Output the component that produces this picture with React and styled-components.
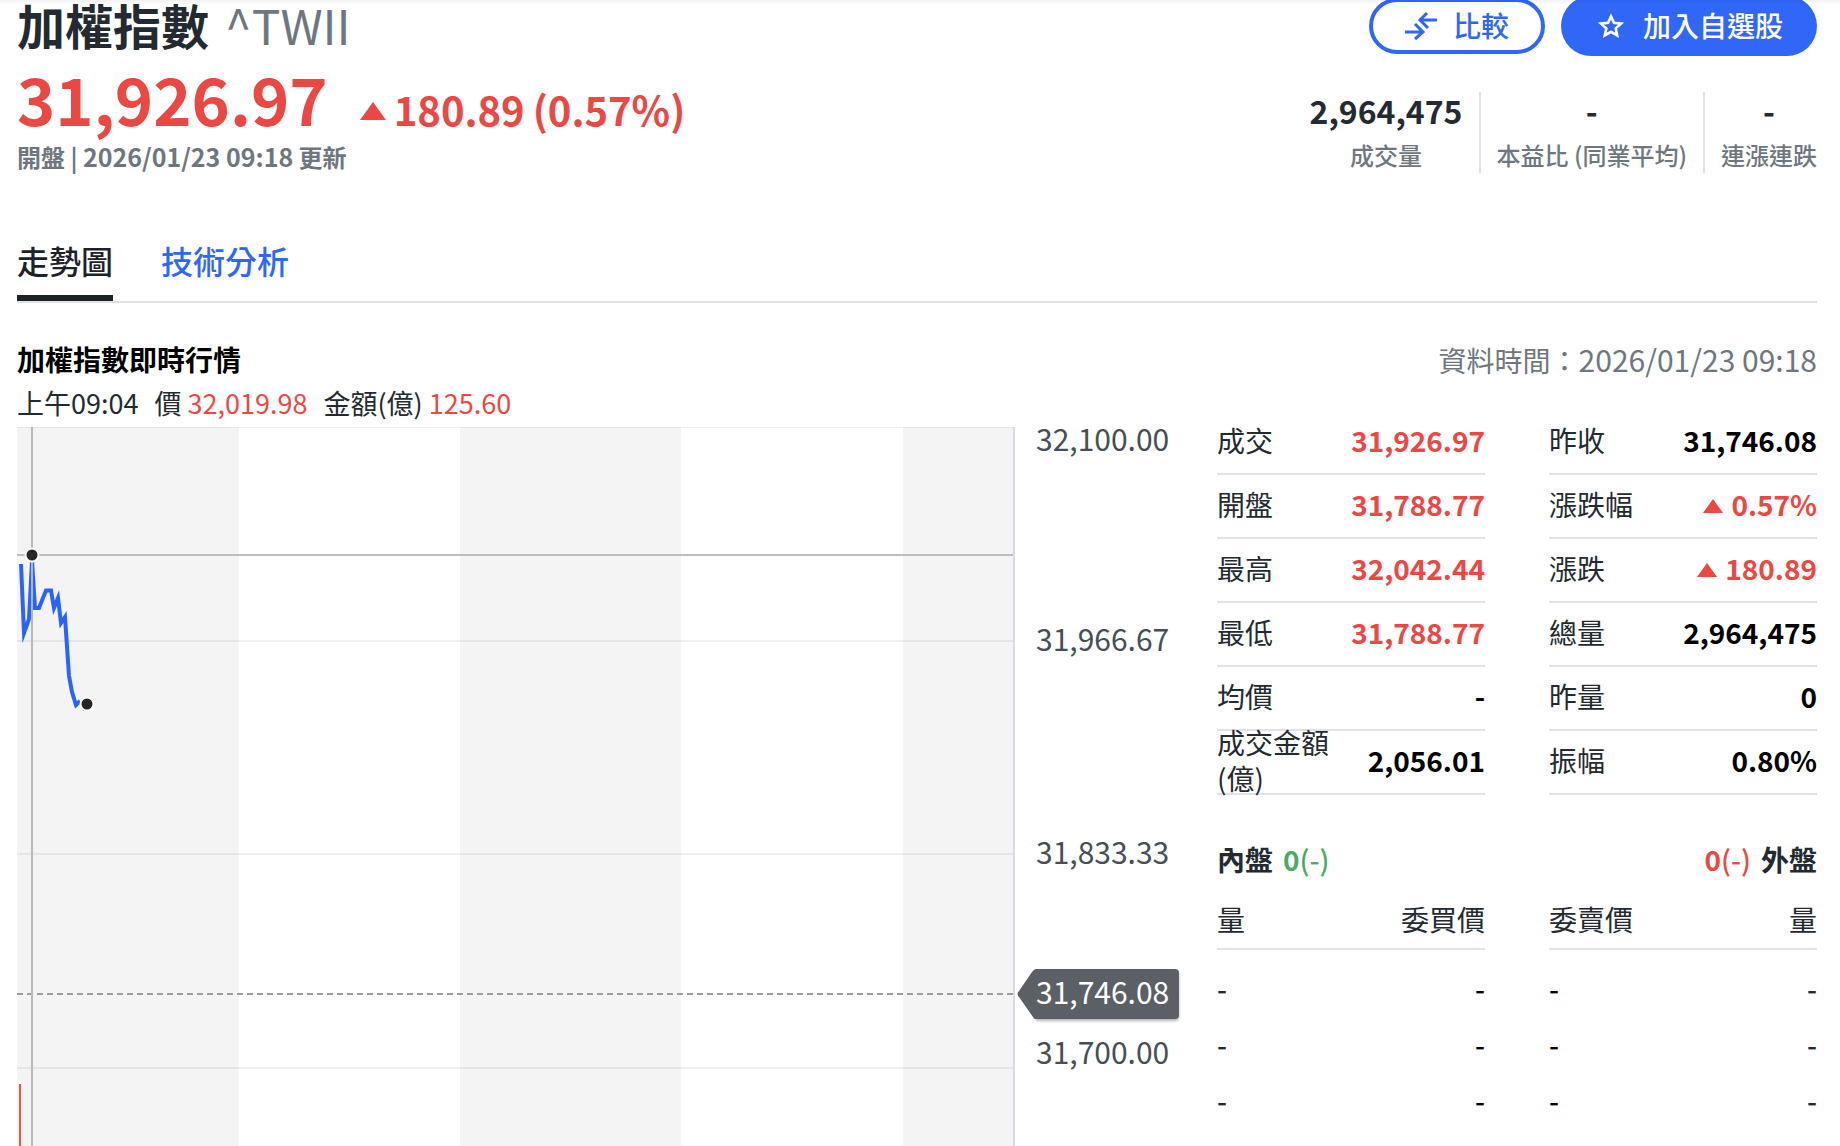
import React from 'react';
import styled, { createGlobalStyle } from 'styled-components';

const color = {
  ink: '#232a31',
  black: '#000000',
  muted: '#6e7780',
  axis: '#464e56',
  blue: '#3067f8',
  line: '#2962ff',
  up: '#eb4843',
  down: '#4daa66',
  border: '#e0e4e9',
  rule: '#e2e3e8',
  band: '#f4f4f4',
  tag: '#5b6067',
};

const GlobalStyle = createGlobalStyle`
  *, *::before, *::after { box-sizing: border-box; }
  html, body { margin: 0; background: #ffffff; }
  body {
    color: ${color.ink};
    font-family: "Noto Sans CJK TC", "Noto Sans", sans-serif;
    font-size: 28px;
    line-height: 36px;
  }
`;

const Page = styled.main`
  position: relative;
  height: 100vh;
  overflow: hidden;
  padding: 0 23px 0 17px;
`;

const TopShade = styled.div`
  position: absolute;
  inset: 0 0 auto 0;
  height: 5px;
  background: linear-gradient(rgba(0, 0, 0, 0.05), rgba(0, 0, 0, 0));
`;

const TitleBar = styled.header`
  display: flex;
  align-items: center;
  justify-content: space-between;
  height: 60px;
  margin-top: -4px;
`;

const TitleGroup = styled.div`
  display: flex;
  gap: 16px;
  align-items: baseline;
  padding-bottom: 4px;
  font-size: 48px;
  line-height: 56px;
`;

const Title = styled.h1`
  margin: 0;
  font-size: inherit;
  font-weight: 700;
`;

const Symbol = styled.span`
  color: ${color.muted};
`;

const Actions = styled.div`
  display: flex;
  align-items: center;
  gap: 16px;
`;

const PillButton = styled.button`
  display: flex;
  align-items: center;
  gap: 16px;
  height: ${(p) => (p.$primary ? 60 : 56)}px;
  padding: 0 ${(p) => (p.$primary ? 34 : 32)}px;
  border: ${(p) => (p.$primary ? '0' : `4px solid ${color.blue}`)};
  border-radius: 30px;
  background: ${(p) => (p.$primary ? color.blue : '#ffffff')};
  color: ${(p) => (p.$primary ? '#ffffff' : color.blue)};
  font: inherit;
  font-weight: 500;
  cursor: pointer;
`;

const ButtonLabel = styled.span`
  padding-bottom: 2px;
`;

const Summary = styled.section`
  display: flex;
  align-items: flex-end;
  justify-content: space-between;
`;

const PriceLine = styled.div`
  display: flex;
  align-items: baseline;
  gap: 8px;
  color: ${color.up};
  font-size: 40px;
  font-weight: 700;
  line-height: 40px;
`;

const LastPrice = styled.span`
  margin-right: 24px;
  font-size: 65px;
  line-height: 84px;
`;

const UpdateTime = styled.div`
  color: ${color.muted};
  font-size: 24px;
  font-weight: 700;
  line-height: 33px;
`;

const UpdateStamp = styled.time`
  font-size: 25px;
`;

const Stats = styled.dl`
  display: flex;
  margin: 0;
`;

const Stat = styled.div`
  display: flex;
  flex-direction: column-reverse;
  gap: 9px;
  padding: 0 16px;
  border-right: 2px solid ${color.border};
  text-align: center;

  &:last-child {
    padding-right: 0;
    border-right: 0;
  }
`;

const StatLabel = styled.dt`
  color: ${color.muted};
  font-size: 24px;
  font-weight: 500;
`;

const StatValue = styled.dd`
  margin: 0;
  font-size: 32px;
  font-weight: 700;
`;

const Tabs = styled.nav`
  display: flex;
  gap: 48px;
  margin-top: 56px;
  border-bottom: 2px solid ${color.border};
`;

const Tab = styled.a`
  height: 72px;
  border-bottom: 6px solid ${(p) => (p.$active ? '#1d2228' : 'transparent')};
  color: ${(p) => (p.$active ? '#1d2228' : color.blue)};
  font-size: 32px;
  font-weight: 500;
  line-height: 62px;
  text-decoration: none;
`;

const SectionHead = styled.div`
  display: flex;
  justify-content: space-between;
  margin-top: 36px;
  line-height: 40px;
`;

const SectionTitle = styled.h2`
  margin: 0;
  color: ${color.black};
  font-size: 28px;
  font-weight: 700;
`;

const DataTime = styled.div`
  color: ${color.muted};
`;

const DataTimeValue = styled.time`
  font-size: 30px;
`;

const Body = styled.div`
  display: grid;
  grid-template-columns: minmax(0, 1fr) 600px;
  column-gap: 32px;
`;

const Legend = styled.div`
  display: flex;
  gap: 16px;
  height: 47px;
  font-size: 27px;
  line-height: 46px;
  white-space: nowrap;
`;

const LegendValue = styled.span`
  color: ${color.up};
`;

const ChartRow = styled.div`
  display: grid;
  grid-template-columns: minmax(0, 1fr) 170px;
`;

const ChartCanvas = styled.svg`
  display: block;
  width: 100%;
  height: 720px;
`;

const Axis = styled.div`
  position: relative;
  display: grid;
  grid-template-rows: 1fr 2fr 2fr 1fr;
  height: 641px;
  padding-left: 21px;
`;

const AxisLabel = styled.span`
  align-self: ${(p) => p.$align};
  padding-bottom: 6px;
  color: ${color.axis};
  font-size: 30px;
  line-height: 22px;
`;

const PriceTag = styled.div`
  position: absolute;
  left: 21px;
  display: flex;
  align-items: center;
  height: 50px;
  padding: 0 10px 6px 0;
  margin-top: -25px;
  border-radius: 0 4px 4px 0;
  background: ${color.tag};
  box-shadow: 0 2px 3px rgba(0, 0, 0, 0.3);
  color: #ffffff;
  font-size: 30px;
`;

const TagPointer = styled.svg`
  position: absolute;
  top: 0;
  right: 100%;
  width: 19px;
  height: 50px;
  fill: ${color.tag};
`;

const Panel = styled.aside`
  padding-top: 31px;
`;

const Columns = styled.div`
  display: grid;
  grid-template-columns: 1fr 1fr;
  column-gap: 64px;
`;

const QuoteList = styled.dl`
  margin: 0;
`;

const QuoteRow = styled.div`
  display: flex;
  align-items: center;
  justify-content: space-between;
  height: 64px;
  padding-bottom: 4px;
  border-bottom: 2px solid ${color.rule};
`;

const QuoteLabel = styled.dt``;

const QuoteValue = styled.dd`
  display: flex;
  align-items: center;
  gap: 8px;
  margin: 0;
  color: ${(p) => (p.$up ? color.up : color.black)};
  font-weight: 700;
`;

const SmallTriangle = styled.svg`
  width: 20px;
  height: 14px;
  margin-top: 4px;
  fill: currentColor;
`;

const LargeTriangle = styled.svg`
  width: 26px;
  height: 24px;
  fill: currentColor;
`;

const TradeSides = styled.div`
  display: flex;
  justify-content: space-between;
  margin-top: 44px;
  line-height: 40px;
`;

const TradeSide = styled.div`
  display: flex;
  flex-direction: ${(p) => (p.$reverse ? 'row-reverse' : 'row')};
  gap: 10px;
  font-weight: 700;
`;

const TradeValue = styled.span`
  color: ${(p) => (p.$up ? color.up : color.down)};
`;

const Ratio = styled.span`
  font-weight: 500;
`;

const DepthTable = styled.table`
  width: 100%;
  margin-top: 10px;
  border-collapse: separate;
  border-spacing: 0;
  table-layout: fixed;
`;

const DepthHead = styled.th`
  height: 61px;
  padding: 0;
  border-bottom: 2px solid ${color.border};
  font-weight: 400;
  text-align: ${(p) => p.$align};
`;

const DepthCell = styled.td`
  height: 56px;
  padding: 10px 0;
  color: ${(p) => (p.$price ? color.black : color.ink)};
  font-weight: 500;
  text-align: ${(p) => p.$align};

  tr:first-child > & {
    height: 66px;
    padding-top: 20px;
  }
`;

const CompareIcon = () => (
  <svg width="32" height="32" viewBox="0 0 32 32" fill="none" stroke="currentColor" strokeWidth="3" aria-hidden="true">
    <path d="M32 10H16M22 3l-7 7 8 8" />
    <path d="M0 22h16M10 29l8-7-8-8" />
  </svg>
);

const StarIcon = () => (
  <svg width="32" height="32" viewBox="0 0 32 32" fill="none" stroke="currentColor" strokeWidth="2.6" aria-hidden="true">
    <path d="M16 6.4l2.9 6.5 7.2.7-5.400 4.800 1.500 7-6.200-3.600-6.200 3.600 1.500-7-5.400-4.800 7.200-.7z" />
  </svg>
);

const PLOT_HEIGHT = 641;
const AXIS_TOP = 32100;
const AXIS_RANGE = 400;
const PREVIOUS_CLOSE = 31746.08;
const CURSOR_PRICE = 32019.98;
const yOf = (price) => Math.round(((AXIS_TOP - price) / AXIS_RANGE) * PLOT_HEIGHT);

const trend =
  'M4 137L7 206L12 192L15 134L18 181H22L29 163.500H34L37 181L41 171L44 196L48 190L52 249L55 265L59 278L63 274';

const Dot = ({ x, y }) => (
  <g strokeLinecap="round">
    <path d={`M${x} ${y}h0`} stroke="#ffffff" strokeWidth="15" vectorEffect="non-scaling-stroke" />
    <path d={`M${x} ${y}h0`} stroke="#26282a" strokeWidth="11" vectorEffect="non-scaling-stroke" />
  </g>
);

const TrendChart = () => (
  <ChartCanvas viewBox="0 0 998 720" preserveAspectRatio="none" role="img" aria-label="加權指數走勢圖">
    <g fill={color.band}>
      <rect x="0" y="0" width="222" height="720" />
      <rect x="443" y="0" width="221" height="720" />
      <rect x="886" y="0" width="110" height="720" />
    </g>
    <g fill="#000000" fillOpacity="0.06">
      <rect x="0" y="0" width="996" height="1" />
      <rect x="0" y="213" width="996" height="2" />
      <rect x="0" y="426" width="996" height="2" />
      <rect x="0" y="640" width="996" height="2" />
    </g>
    <rect x="996" y="0" width="2" height="720" fill="#d8dce2" />
    <path
      d={`M0 ${yOf(PREVIOUS_CLOSE)}H996`}
      stroke="#9c9c9c"
      strokeWidth="2"
      strokeDasharray="6 4"
    />
    <rect x="2" y="657" width="2" height="63" fill="#ec5353" />
    <path d={trend} fill="none" stroke={color.line} strokeWidth="4" strokeMiterlimit="10" />
    <path d="M63 275c1 5 2 7 4 9" fill="none" stroke={color.line} strokeWidth="1" />
    <rect x="0" y={yOf(CURSOR_PRICE) - 1} width="996" height="2" fill="#bbbec4" />
    <rect x="14" y="0" width="2" height="720" fill="#b5b9c0" />
    <Dot x={15} y={yOf(CURSOR_PRICE)} />
    <Dot x={70} y={277} />
  </ChartCanvas>
);

const leftQuotes = [
  { label: '成交', value: '31,926.97', up: true },
  { label: '開盤', value: '31,788.77', up: true },
  { label: '最高', value: '32,042.44', up: true },
  { label: '最低', value: '31,788.77', up: true },
  { label: '均價', value: '-' },
  { label: '成交金額(億)', value: '2,056.01' },
];

const rightQuotes = [
  { label: '昨收', value: '31,746.08' },
  { label: '漲跌幅', value: '0.57%', up: true, mark: true },
  { label: '漲跌', value: '180.89', up: true, mark: true },
  { label: '總量', value: '2,964,475' },
  { label: '昨量', value: '0' },
  { label: '振幅', value: '0.80%' },
];

const Quotes = ({ items }) => (
  <QuoteList>
    {items.map((q) => (
      <QuoteRow key={q.label}>
        <QuoteLabel>{q.label}</QuoteLabel>
        <QuoteValue $up={q.up}>
          {q.mark && (
            <SmallTriangle viewBox="0 0 20 14" aria-hidden="true">
              <path d="M10 0l10 14H0z" />
            </SmallTriangle>
          )}
          {q.value}
        </QuoteValue>
      </QuoteRow>
    ))}
  </QuoteList>
);

const Depth = ({ heads, priceIndex }) => (
  <DepthTable>
    <thead>
      <tr>
        {heads.map((h, i) => (
          <DepthHead key={h} scope="col" $align={i ? 'right' : 'left'}>{h}</DepthHead>
        ))}
      </tr>
    </thead>
    <tbody>
      {[0, 1, 2].map((row) => (
        <tr key={row}>
          {heads.map((h, i) => (
            <DepthCell key={h} $align={i ? 'right' : 'left'} $price={i === priceIndex}>-</DepthCell>
          ))}
        </tr>
      ))}
    </tbody>
  </DepthTable>
);

export default function App() {
  return (
    <Page>
      <GlobalStyle />
      <TitleBar>
        <TitleGroup>
          <Title>加權指數</Title>
          <Symbol>^TWII</Symbol>
        </TitleGroup>
        <Actions>
          <PillButton type="button">
            <CompareIcon />
            <ButtonLabel>比較</ButtonLabel>
          </PillButton>
          <PillButton type="button" $primary>
            <StarIcon />
            <ButtonLabel>加入自選股</ButtonLabel>
          </PillButton>
        </Actions>
      </TitleBar>

      <Summary>
        <div>
          <PriceLine>
            <LastPrice>31,926.97</LastPrice>
            <LargeTriangle viewBox="0 0 26 24" aria-hidden="true">
              <path d="M13 0l13 18H0z" />
            </LargeTriangle>
            <span>180.89</span>
            <span>(0.57%)</span>
          </PriceLine>
          <UpdateTime>
            開盤 | <UpdateStamp>2026/01/23 09:18</UpdateStamp> 更新
          </UpdateTime>
        </div>
        <Stats>
          <Stat>
            <StatLabel>成交量</StatLabel>
            <StatValue>2,964,475</StatValue>
          </Stat>
          <Stat>
            <StatLabel>本益比 (同業平均)</StatLabel>
            <StatValue>-</StatValue>
          </Stat>
          <Stat>
            <StatLabel>連漲連跌</StatLabel>
            <StatValue>-</StatValue>
          </Stat>
        </Stats>
      </Summary>

      <Tabs>
        <Tab href="#trend" $active aria-current="page">走勢圖</Tab>
        <Tab href="#technical">技術分析</Tab>
      </Tabs>

      <SectionHead>
        <SectionTitle>加權指數即時行情</SectionTitle>
        <DataTime>
          資料時間：<DataTimeValue>2026/01/23 09:18</DataTimeValue>
        </DataTime>
      </SectionHead>

      <Body>
        <section>
          <Legend>
            <span>上午09:04</span>
            <span>價 <LegendValue>32,019.98</LegendValue></span>
            <span>金額(億) <LegendValue>125.60</LegendValue></span>
          </Legend>
          <ChartRow>
            <TrendChart />
            <Axis>
              <AxisLabel $align="start">32,100.00</AxisLabel>
              <AxisLabel $align="center">31,966.67</AxisLabel>
              <AxisLabel $align="center">31,833.33</AxisLabel>
              <AxisLabel $align="end">31,700.00</AxisLabel>
              <PriceTag style={{ top: yOf(PREVIOUS_CLOSE) }}>
                <TagPointer viewBox="0 0 19 50" aria-hidden="true">
                  <path d="M19 0h1v50H18q-1 0-2-2L2 28q-3-3 0-6L15 3q2-3 4-3z" />
                </TagPointer>
                31,746.08
              </PriceTag>
            </Axis>
          </ChartRow>
        </section>

        <Panel>
          <Columns>
            <Quotes items={leftQuotes} />
            <Quotes items={rightQuotes} />
          </Columns>
          <TradeSides>
            <TradeSide>
              <span>內盤</span>
              <TradeValue>0<Ratio>(-)</Ratio></TradeValue>
            </TradeSide>
            <TradeSide $reverse>
              <span>外盤</span>
              <TradeValue $up>0<Ratio>(-)</Ratio></TradeValue>
            </TradeSide>
          </TradeSides>
          <Columns>
            <Depth heads={['量', '委買價']} priceIndex={1} />
            <Depth heads={['委賣價', '量']} priceIndex={0} />
          </Columns>
        </Panel>
      </Body>
      <TopShade />
    </Page>
  );
}
